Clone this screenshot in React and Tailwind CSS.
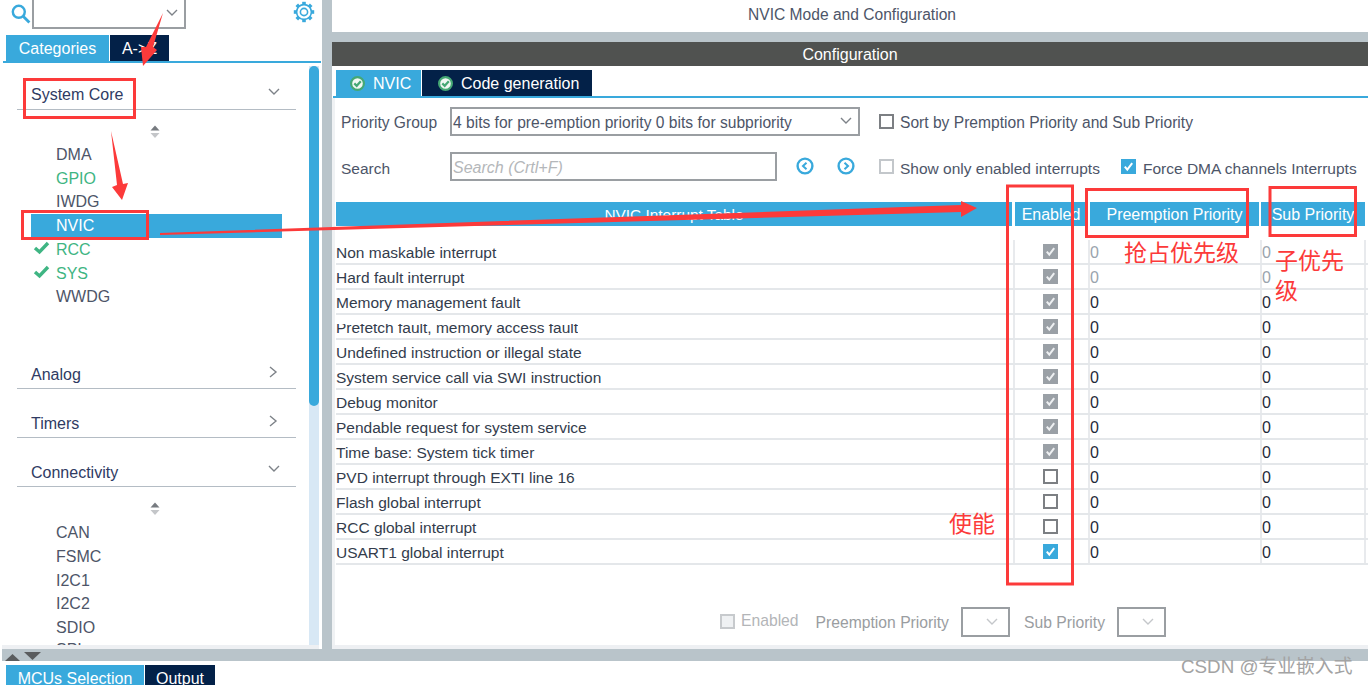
import React from "react";

const FONT = "font-['Liberation_Sans',Arial,sans-serif]";
const CJK = "font-['Noto_Sans_CJK_SC',sans-serif]";

function Chevron({ dir = "down", className = "" }) {
  const pts = dir === "down" ? "1,2 6,7 11,2" : "2,1 8,6 2,11";
  return (
    <svg width="12" height="12" viewBox="0 0 12 12" className={className}>
      <polyline points={pts} fill="none" stroke="#7d8288" strokeWidth="1.4" />
    </svg>
  );
}

function Updown() {
  return (
    <svg width="12" height="14" viewBox="0 0 12 14" className="block mx-auto">
      <path d="M6 0.5 L10.5 5.5 H1.5 Z" fill="#777b80" />
      <path d="M1.5 8 H10.5 L6 13 Z" fill="#c4c6c9" />
    </svg>
  );
}

function CircleCheck() {
  return (
    <svg width="15" height="15" viewBox="0 0 15 15" className="shrink-0">
      <circle cx="7.5" cy="7.5" r="6.4" fill="#f1f8f3" stroke="#45a874" strokeWidth="2.2" />
      <polyline points="4.3,7.4 6.7,9.8 10.8,5.2" fill="none" stroke="#45a874" strokeWidth="2.2" />
    </svg>
  );
}

function Tick({ color = "#fff" }) {
  return (
    <svg width="15" height="15" viewBox="0 0 15 15" className="block">
      <polyline points="3.8,7.6 6.3,10.6 11.2,4.2" fill="none" stroke={color} strokeWidth="2" />
    </svg>
  );
}

function Check({ kind }) {
  if (kind === "gray") return <span className="block w-[15px] h-[15px] bg-[#9aa0a6]"><Tick color="#eef0f2" /></span>;
  if (kind === "blue") return <span className="block w-[15px] h-[15px] bg-[#39a9dc]"><Tick /></span>;
  if (kind === "light") return <span className="block w-[15px] h-[15px] border-2 border-[#c3c7cb] bg-white" />;
  if (kind === "off") return <span className="block w-[15px] h-[15px] border-2 border-[#c7cacd] bg-[#eff1f3]" />;
  return <span className="block w-[15px] h-[15px] border-2 border-[#7c7f83] bg-white" />;
}

function Nav({ left }) {
  return (
    <svg width="18" height="18" viewBox="0 0 18 18">
      <circle cx="9" cy="9" r="7.4" fill="none" stroke="#39a9dc" strokeWidth="2.4" />
      <polyline points={left ? "10.5,5.8 7,9 10.5,12.2" : "7.5,5.8 11,9 7.5,12.2"} fill="none" stroke="#39a9dc" strokeWidth="2" />
    </svg>
  );
}

function Gear() {
  const teeth = [0, 45, 90, 135, 180, 225, 270, 315];
  return (
    <svg width="22" height="22" viewBox="0 0 22 22">
      <circle cx="11" cy="11" r="7.4" fill="none" stroke="#39a9dc" strokeWidth="1.6" />
      <circle cx="11" cy="11" r="3.6" fill="none" stroke="#39a9dc" strokeWidth="1.6" />
      {teeth.map((a) => (
        <rect key={a} x="9.2" y="0.8" width="3.6" height="3" fill="#39a9dc" transform={`rotate(${a} 11 11)`} />
      ))}
    </svg>
  );
}

function GroupHead({ label, open, first, className = "" }) {
  return (
    <div className={`ml-[17px] w-[279px] h-[27px] border-b-[1.5px] border-[#b4bcc4] flex items-center justify-between pl-[14px] pr-[16px] text-[#2f3b63] ${className}`}>
      <span className={first ? "-mt-[3px]" : "-mt-[1px]"}>{label}</span>
      <Chevron dir={open ? "down" : "right"} className="-mt-[6px]" />
    </div>
  );
}

function Item({ label, green, checked, active, className = "" }) {
  return (
    <div className={`h-[23.75px] flex items-center relative ml-[31px] w-[251px] pl-[25px] ${active ? "bg-[#39a9dc] text-white" : green ? "text-[#3fb583]" : "text-[#4d5568]"} ${className}`}>
      {checked && (
        <svg width="17" height="14" viewBox="0 0 17 14" className="absolute left-[2px] top-[3px]">
          <polyline points="2,7 6.5,11 15,2" fill="none" stroke="#3fb583" strokeWidth="3.4" />
        </svg>
      )}
      {label}
    </div>
  );
}

const ROWS = [
  ["Non maskable interrupt", "gray", true],
  ["Hard fault interrupt", "gray", true],
  ["Memory management fault", "gray"],
  ["Prefetch fault, memory access fault", "gray", false, true],
  ["Undefined instruction or illegal state", "gray"],
  ["System service call via SWI instruction", "gray"],
  ["Debug monitor", "gray"],
  ["Pendable request for system service", "gray"],
  ["Time base: System tick timer", "gray"],
  ["PVD interrupt through EXTI line 16", "box"],
  ["Flash global interrupt", "box"],
  ["RCC global interrupt", "box"],
  ["USART1 global interrupt", "blue"],
];

function Row({ label, kind, dim, clip }) {
  const num = dim ? "text-[#9aa4ad]" : "text-[#1f2a3a]";
  return (
    <div className="grid grid-cols-[677px_75px_172px_106px] h-[25px] border-b-2 border-[#e4e7ea]">
      <div className="flex items-center text-[#333c4c] text-[15.5px] whitespace-nowrap">
        {clip ? (
          <span className="self-start mt-[9px] h-[11px] overflow-hidden flex items-end">
            <span className="block">{label}</span>
          </span>
        ) : (
          <span className="mt-[3px]">{label}</span>
        )}
      </div>
      <div className="border-l-2 border-[#e8eaed] flex items-center justify-center pr-[3px]">
        <Check kind={kind} />
      </div>
      <div className={`border-l-2 border-[#e8eaed] flex items-center pt-[3px] ${num}`}>0</div>
      <div className={`border-l-2 border-[#e8eaed] border-r-2 flex items-center pt-[3px] ${num}`}>0</div>
    </div>
  );
}

function SmallSelect() {
  return (
    <div className="w-[49px] h-[30px] border-2 border-[#9a9ea2] flex items-center justify-end pr-[10px]">
      <svg width="12" height="8" viewBox="0 0 12 8"><polyline points="1,1 6,6 11,1" fill="none" stroke="#c4c7ca" strokeWidth="1.4" /></svg>
    </div>
  );
}

function Sidebar() {
  return (
    <aside className="w-[322px] shrink-0 bg-white flex flex-col h-full overflow-hidden">
      <div className="h-[35px] shrink-0 flex items-start">
        <svg width="20" height="20" viewBox="0 0 20 20" className="ml-[11px] mt-[4px]">
          <circle cx="7.8" cy="7.8" r="6" fill="none" stroke="#39a9dc" strokeWidth="2.4" />
          <line x1="12.4" y1="12.4" x2="18.4" y2="18.4" stroke="#39a9dc" strokeWidth="2.8" />
        </svg>
        <div className="ml-[1px] w-[154px] h-[29px] border-2 border-t-0 border-[#9a9ea2] flex items-center justify-end pr-[6px]">
          <Chevron className="mt-[1px]" />
        </div>
        <div className="ml-[107px] mt-[1px]"><Gear /></div>
      </div>
      <div className="h-[26px] shrink-0 flex pl-[6px] gap-[1px]">
        <div className="w-[103px] bg-[#39a9dc] text-white flex items-center justify-center pt-[2px]">Categories</div>
        <div className="w-[59px] bg-[#032148] text-white flex items-center justify-center pt-[2px]">A-&gt;Z</div>
      </div>
      <div className="h-[2px] ml-[3px] mr-[1px] shrink-0 bg-[#39a9dc]" />
      <div className="flex-1 min-h-0 flex ml-[2px] mr-[3px] border-b-4 border-[#eef0f3]">
        <div className="w-[3px] bg-[#eef0f3] shrink-0" />
        <div className="w-[304px] shrink-0 bg-white overflow-hidden pt-[20px] -ml-[5px]">
          <GroupHead label="System Core" open first />
          <div className="h-[30px] pt-[15px] pl-[6px]"><Updown /></div>
          <div className="pt-[3px]">
            <Item label="DMA" />
            <Item label="GPIO" green />
            <Item label="IWDG" />
            <Item label="NVIC" active />
            <Item label="RCC" green checked />
            <Item label="SYS" green checked />
            <Item label="WWDG" />
          </div>
          <GroupHead label="Analog" className="mt-[53px]" />
          <GroupHead label="Timers" className="mt-[22px]" />
          <GroupHead label="Connectivity" open className="mt-[22px]" />
          <div className="h-[30px] pt-[15px] pl-[6px]"><Updown /></div>
          <div className="pt-[4px]">
            <Item label="CAN" />
            <Item label="FSMC" />
            <Item label="I2C1" />
            <Item label="I2C2" />
            <Item label="SDIO" />
            <Item label="SPI" className="-mt-[2px]" />
          </div>
        </div>
        <div className="w-[10px] ml-[5px] shrink-0 bg-[#d8e8f5] relative mt-[3px]">
          <div className="h-[340px] bg-[#39a9dc] rounded-t-[5px] rounded-b-[5px]" />
        </div>
      </div>
    </aside>
  );
}

function Main() {
  return (
    <main className="flex-1 min-w-0 flex flex-col h-full">
      <div className="h-[32px] shrink-0 bg-white flex items-center justify-center text-[#4d5568] text-[15.6px]">
        <span className="-mt-[3px] ml-[4px]">NVIC Mode and Configuration</span>
      </div>
      <div className="h-[10px] shrink-0" />
      <div className="h-[24px] shrink-0 bg-[#505250] text-white flex items-center justify-center pt-[2px]">
        <span>Configuration</span>
      </div>
      <div className="flex-1 min-h-0 bg-white border-b-4 border-[#eef0f3] flex flex-col">
        <div className="h-[26px] mt-[4px] shrink-0 flex pl-[4px] gap-[1px]">
          <div className="w-[85px] bg-[#39a9dc] text-white flex items-center pl-[14px] gap-[8px] pt-[1px]"><CircleCheck /><span className="pt-[1px]">NVIC</span></div>
          <div className="w-[170px] bg-[#032148] text-white flex items-center pl-[16px] gap-[8px] pt-[1px]"><CircleCheck /><span className="pt-[1px]">Code generation</span></div>
        </div>
        <div className="h-[2px] shrink-0 ml-[1px] bg-[#39a9dc]" />
        <div className="flex-1 min-h-0 flex flex-col pl-[1px] border-l-[3px] border-[#f0f2f4]">
          <div className="h-[29px] mt-[9px] shrink-0 flex items-center text-[#4d5568] text-[15.6px]">
            <span className="w-[114px] pl-[5px] mt-[2px]">Priority Group</span>
            <div className="w-[410px] h-[29px] border-2 border-[#9a9ea2] flex items-center justify-between pl-[1px] pr-[6px] text-[#4d5568]">
              <span className="mt-[2px]">4 bits for pre-emption priority 0 bits for subpriority</span>
              <Chevron />
            </div>
            <div className="ml-[19px]"><Check kind="box" /></div>
            <span className="ml-[6px] mt-[2px]">Sort by Premption Priority and Sub Priority</span>
          </div>
          <div className="h-[29px] mt-[16px] shrink-0 flex items-center text-[#4d5568] text-[15.5px]">
            <span className="w-[114px] pl-[5px] mt-[4px]">Search</span>
            <div className="w-[327px] h-[29px] border-2 border-[#9a9ea2] flex items-center pl-[1px] italic text-[#b4b7ba] text-base pt-[3px]">Search (Crtl+F)</div>
            <div className="ml-[19px] -mt-[2px]"><Nav left /></div>
            <div className="ml-[23px] -mt-[2px]"><Nav /></div>
            <div className="ml-[24px]"><Check kind="light" /></div>
            <span className="ml-[6px] w-[221px] mt-[4px]">Show only enabled interrupts</span>
            <Check kind="blue" />
            <span className="ml-[7px] mt-[4px] whitespace-nowrap">Force DMA channels Interrupts</span>
          </div>
          <div className="h-[24px] mt-[21px] shrink-0 flex text-white">
            <div className="w-[676px] bg-[#39a9dc] flex items-center justify-center pt-[2px] text-[15.4px]">NVIC Interrupt Table</div>
            <div className="w-[70px] ml-[3px] bg-[#39a9dc] flex items-center justify-center pt-[2px] pl-[2px]">Enabled</div>
            <div className="w-[169px] ml-[5px] bg-[#39a9dc] flex items-center justify-center pt-[2px]">Preemption Priority</div>
            <div className="w-[104px] ml-[2px] bg-[#39a9dc] flex items-center justify-center pt-[2px]">Sub Priority</div>
          </div>
          <div className="mt-[14px] shrink-0">
            {ROWS.map(([label, kind, dim, clip]) => (
              <Row key={label} label={label} kind={kind} dim={dim} clip={clip} />
            ))}
          </div>
          <div className="h-[30px] mt-[42px] shrink-0 flex items-center pl-[384px] text-[15.7px]">
            <div className="-mt-[2px]"><Check kind="off" /></div>
            <span className="ml-[6px] -mt-[2px] text-[#b3b5b8]">Enabled</span>
            <span className="ml-[17px] mt-[2px] text-[#9a9da1]">Preemption Priority</span>
            <div className="ml-[12px]"><SmallSelect /></div>
            <span className="ml-[14px] mt-[2px] text-[#9a9da1]">Sub Priority</span>
            <div className="ml-[12px]"><SmallSelect /></div>
          </div>
        </div>
      </div>
    </main>
  );
}

function Overlay() {
  const red = "#fc3a3a";
  return (
    <svg width="1368" height="685" viewBox="0 0 1368 685" className="absolute left-0 top-0 pointer-events-none">
      <g fill="none" stroke={red} strokeWidth="3">
        <rect x="24.5" y="79.5" width="110" height="38" />
        <rect x="22.5" y="211.5" width="125" height="27" />
        <rect x="1007.5" y="186" width="65" height="398" />
        <rect x="1086.5" y="189.5" width="161" height="47" />
        <rect x="1270" y="187.5" width="85.5" height="48" />
      </g>
      <g fill={red}>
        <polygon points="163,13 153,47 157,50 143,66 141,47 146,47" />
        <polygon points="111,131 123,184 128,183 122,200 112,187 117,185" />
        <polygon points="160,233 961,205 961,201 977,208 961,217 961,212 160,235" />
      </g>
    </svg>
  );
}

export default function App() {
  return (
    <div className={`relative w-[1368px] h-[685px] overflow-hidden bg-white text-base leading-none ${FONT}`}>
      <div className="h-[649px] flex bg-[#b9c4ca]">
        <Sidebar />
        <div className="w-[10px] shrink-0" />
        <Main />
      </div>
      <div className="h-[12px] ml-[2px] bg-[#b9c4ca] relative overflow-hidden">
        <svg width="40" height="12" viewBox="0 0 40 12" className="absolute left-[3px] top-0">
          <path d="M0 12 L7.5 5 L15 12 Z" fill="#5a5c5e" />
          <path d="M19 3 H36 L27.5 11 Z" fill="#5a5c5e" />
        </svg>
      </div>
      <div className="h-[20px] mt-[4px] flex pl-[6px] gap-[1px] text-white overflow-hidden">
        <div className="w-[138px] bg-[#39a9dc] flex items-start justify-center pt-[6px]">MCUs Selection</div>
        <div className="w-[70px] bg-[#032148] flex items-start justify-center pt-[6px]">Output</div>
      </div>
      <Overlay />
      <span className={`absolute left-[1124px] top-[237px] text-[23px] leading-[28px] text-[#fc3a3a] ${CJK}`}>抢占优先级</span>
      <span className={`absolute left-[1275px] top-[244px] w-[72px] text-[23px] leading-[30px] text-[#fc3a3a] ${CJK}`}>子优先级</span>
      <span className={`absolute left-[949px] top-[508px] text-[23px] leading-[28px] text-[#fc3a3a] ${CJK}`}>使能</span>
      <span className={`absolute left-[1181px] top-[653px] text-[18.8px] leading-[24px] text-[#a3a3a3] whitespace-nowrap ${FONT}`}>
        CSDN @<span className={CJK}>专业嵌入式</span>
      </span>
    </div>
  );
}
